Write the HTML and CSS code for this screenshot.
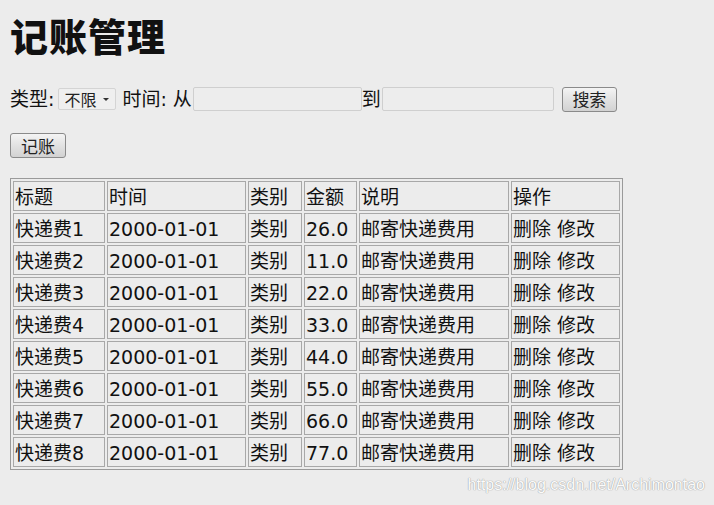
FILE: index.html
```html
<!DOCTYPE html>
<html lang="zh-CN">
<head>
<meta charset="utf-8">
<title>记账管理</title>
<link rel="stylesheet" href="styles.css">
</head>
<body>
<h1 class="title">记账管理</h1>
<form class="filter">
  <span class="label">类型:</span>
  <span class="select-wrap"><select class="select"><option>不限</option></select></span>
  <span class="label gap">时间: 从</span><input class="field" type="text"><span class="label">到</span><input class="field field-2" type="text">
  <button class="btn btn-search" type="button">搜索</button>
</form>
<div class="actions"><button class="btn btn-add" type="button">记账</button></div>
<table class="grid">
  <thead>
    <tr><td class="c1">标题</td><td class="c2">时间</td><td class="c3">类别</td><td class="c4">金额</td><td class="c5">说明</td><td class="c6">操作</td></tr>
  </thead>
  <tbody>
    <tr><td>快递费1</td><td>2000-01-01</td><td>类别</td><td>26.0</td><td>邮寄快递费用</td><td>删除 修改</td></tr>
    <tr><td>快递费2</td><td>2000-01-01</td><td>类别</td><td>11.0</td><td>邮寄快递费用</td><td>删除 修改</td></tr>
    <tr><td>快递费3</td><td>2000-01-01</td><td>类别</td><td>22.0</td><td>邮寄快递费用</td><td>删除 修改</td></tr>
    <tr><td>快递费4</td><td>2000-01-01</td><td>类别</td><td>33.0</td><td>邮寄快递费用</td><td>删除 修改</td></tr>
    <tr><td>快递费5</td><td>2000-01-01</td><td>类别</td><td>44.0</td><td>邮寄快递费用</td><td>删除 修改</td></tr>
    <tr><td>快递费6</td><td>2000-01-01</td><td>类别</td><td>55.0</td><td>邮寄快递费用</td><td>删除 修改</td></tr>
    <tr><td>快递费7</td><td>2000-01-01</td><td>类别</td><td>66.0</td><td>邮寄快递费用</td><td>删除 修改</td></tr>
    <tr><td>快递费8</td><td>2000-01-01</td><td>类别</td><td>77.0</td><td>邮寄快递费用</td><td>删除 修改</td></tr>
  </tbody>
</table>
<div class="watermark">https://blog.csdn.net/Archimontao</div>
</body>
</html>
```
FILE: styles.css
```css
html, body {
  margin: 0;
  padding: 0;
  background: #ececec;
}
body {
  padding: 0 10px;
  color: #111;
  font-family: "DejaVu Sans", "Noto Sans CJK SC", sans-serif;
  height: 505px;
  position: relative;
  overflow: hidden;
}
.title {
  margin: 11px 0 0;
  font-family: "Noto Sans CJK SC", sans-serif;
  font-weight: 900;
  font-size: 38px;
  line-height: 48px;
  letter-spacing: 1px;
  color: #111;
}
.filter {
  margin: 28px 0 0;
  display: flex;
  align-items: center;
  height: 24px;
  font-size: 19px;
}
.label {
  font-family: "DejaVu Sans", "Noto Sans CJK SC", sans-serif;
  font-size: 19px;
  line-height: 24px;
  white-space: pre;
}
.label.gap { margin-left: 6px; }
.select-wrap {
  position: relative;
  margin-left: 4px;
  display: inline-block;
  height: 22px;
}
.select {
  appearance: none;
  -webkit-appearance: none;
  width: 58px;
  height: 22px;
  border: 1px solid #d4d4d4;
  border-radius: 2px;
  background: #efefef;
  font-family: "Noto Sans CJK SC", sans-serif;
  font-size: 16px;
  color: #222;
  padding: 0 0 0 5px;
  margin: 0;
  line-height: 20px;
}
.select-wrap::after {
  content: "";
  position: absolute;
  right: 7px;
  top: 10px;
  border-left: 3px solid transparent;
  border-right: 3px solid transparent;
  border-top: 3px solid #333;
  pointer-events: none;
}
.field {
  width: 169px;
  height: 24px;
  box-sizing: border-box;
  border: 1px solid #cfcfcf;
  border-radius: 2px;
  background: #ededed;
  margin: 0 0 0 1px;
  padding: 0;
}
.field-2 { width: 172px; }
.btn {
  font-family: "Noto Sans CJK SC", sans-serif;
  font-size: 17px;
  color: #222;
  border: 1px solid #8a8a8a;
  border-radius: 3px;
  background: linear-gradient(#f4f4f4, #e2e2e2 50%, #d2d2d2);
  padding: 0;
  line-height: 22px;
  height: 25px;
}
.btn-search {
  width: 55px;
  margin-left: 8px;
}
.actions {
  margin-top: 22px;
  height: 25px;
}
.btn-add { width: 56px; }
.grid {
  margin-top: 20px;
  border: 1px solid #9a9a9a;
  border-spacing: 2px;
  font-size: 19px;
}
.grid td {
  border: 1px solid #a8a8a8;
  padding: 2px 1px 0;
  height: 26px;
  line-height: 26px;
  white-space: nowrap;
  vertical-align: middle;
}
.c1 { width: 88px; }
.c2 { width: 135px; }
.c3 { width: 50px; }
.c4 { width: 49px; }
.c5 { width: 146px; }
.c6 { width: 105px; }
.watermark {
  position: absolute;
  right: 9px;
  top: 476px;
  font-family: "Liberation Sans", sans-serif;
  font-size: 16px;
  color: #fbfbfb;
  text-shadow: 0 0 1px #a0a0a0, 0 0 1px #a0a0a0;
  white-space: nowrap;
}
```
